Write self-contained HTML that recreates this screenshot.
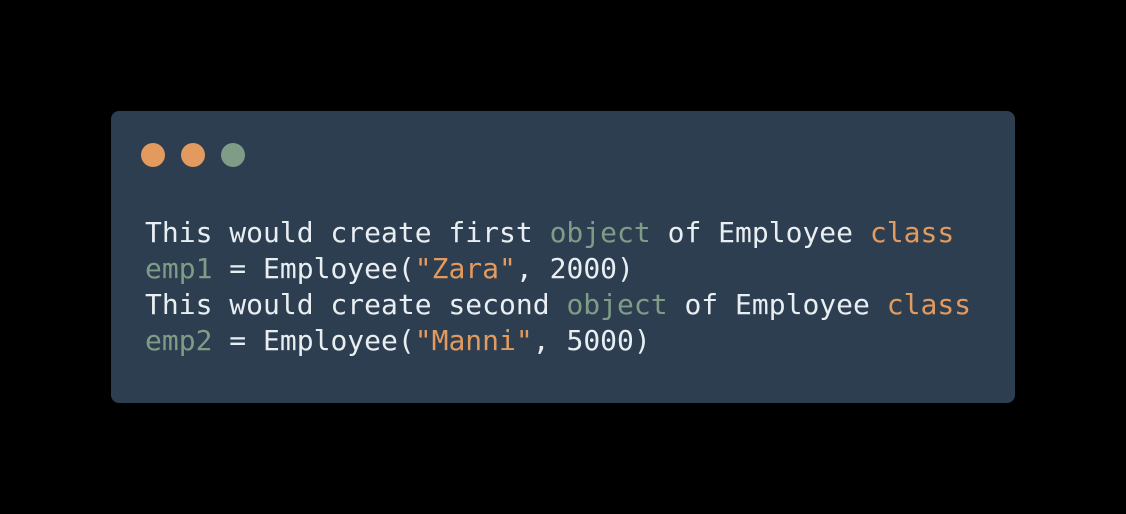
<!DOCTYPE html>
<html><head><style>
html,body{margin:0;padding:0;background:#000;width:1126px;height:514px;overflow:hidden}
.card{position:absolute;left:111px;top:111px;width:904px;height:292px;background:#2c3e50;border-radius:8px}
.dot{position:absolute;top:32px;width:24px;height:24px;border-radius:50%}
pre{position:absolute;left:34px;top:104px;margin:0;font-family:"DejaVu Sans Mono","Liberation Mono",monospace;font-size:28px;line-height:36px;color:#e8eef2}
.g{color:#7f9c87}.o{color:#e29a5f}
</style></head><body>
<div class="card">
<div class="dot" style="left:30px;background:#e29a5f"></div>
<div class="dot" style="left:70px;background:#e29a5f"></div>
<div class="dot" style="left:110px;background:#7f9c87"></div>
<pre>This would create first <span class="g">object</span> of Employee <span class="o">class</span>
<span class="g">emp1</span> = Employee(<span class="o">"Zara"</span>, 2000)
This would create second <span class="g">object</span> of Employee <span class="o">class</span>
<span class="g">emp2</span> = Employee(<span class="o">"Manni"</span>, 5000)</pre>
</div>
</body></html>
